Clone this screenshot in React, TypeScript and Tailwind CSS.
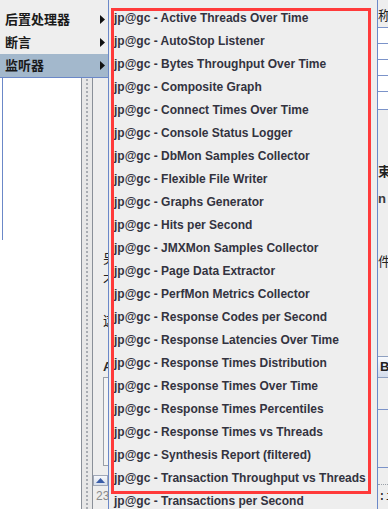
const items = [
  "Active Threads Over Time",
  "AutoStop Listener",
  "Bytes Throughput Over Time",
  "Composite Graph",
  "Connect Times Over Time",
  "Console Status Logger",
  "DbMon Samples Collector",
  "Flexible File Writer",
  "Graphs Generator",
  "Hits per Second",
  "JMXMon Samples Collector",
  "Page Data Extractor",
  "PerfMon Metrics Collector",
  "Response Codes per Second",
  "Response Latencies Over Time",
  "Response Times Distribution",
  "Response Times Over Time",
  "Response Times Percentiles",
  "Response Times vs Threads",
  "Synthesis Report (filtered)",
  "Transaction Throughput vs Threads",
  "Transactions per Second",
];

const menu = [
  { label: "后置处理器", active: false },
  { label: "断言", active: false },
  { label: "监听器", active: true },
];

function Arrow() {
  return (
    <svg width="5" height="9" viewBox="0 0 5 9" className="shrink-0">
      <path d="M0 0 L5 4.5 L0 9 Z" fill="#111" />
    </svg>
  );
}

export default function App() {
  return (
    <div
      className="relative w-[388px] h-[509px] overflow-hidden bg-[#eeeeee]"
      style={{ fontFamily: '"Liberation Sans", "Noto Sans CJK SC", sans-serif' }}
    >
      {/* background window */}
      <div className="flex h-full">
        {/* tree */}
        <div className="w-[81px] bg-white">
          <div className="ml-[2px] mt-[78px] h-[162px] border-l border-[#6b88c8]" />
        </div>

        {/* splitter */}
        <div className="w-[12px] flex justify-center border-l border-r border-[#8a9099] bg-[#e8e8e8]">
          <div className="h-full border-l-2 border-dotted border-[#a9adb3]" />
        </div>

        {/* content, left edge peeking out */}
        <div className="w-[15px] flex flex-col overflow-hidden pl-[10px] text-[13px] text-[#222] whitespace-nowrap">
          <div className="mt-[251px] h-[16px] leading-[16px]">另</div>
          <div className="mt-[6px] h-[16px] leading-[16px]">不</div>
          <div className="mt-[24px] h-[16px] leading-[16px]">这</div>
          <div className="mt-[30px] h-[16px] leading-[16px] font-bold text-[#2a2a2a]">A</div>
          <div className="mt-[2px] h-[89px] w-[20px] border border-[#9aa0a8] bg-[#f4f4f4]" />
          <div className="-ml-[10px] mt-[9px] h-[11px] w-[15px] flex items-center justify-center border border-[#a0a8b8] bg-gradient-to-b from-[#f6f8fc] to-[#d6deea]">
            <svg width="9" height="5" viewBox="0 0 9 5">
              <path d="M0 5 L4.5 0 L9 5 Z" fill="#3a5da8" />
            </svg>
          </div>
          <div className="-ml-[7px] mt-[3px] text-[12px] leading-[14px] text-[#8a8a8a]">23</div>
        </div>

        {/* area under the submenu */}
        <div className="w-[270px]" />

        {/* content, right edge peeking out */}
        <div className="flex-1 flex flex-col overflow-hidden text-[13px] text-[#222] whitespace-nowrap">
          <div className="h-[28px] pt-[8px] leading-[16px] border-b border-[#7b93c9]">称</div>
          <div className="h-[16px] bg-white border-b border-[#7b93c9]" />
          <div className="h-[16px] bg-white border-b border-[#7b93c9]" />
          <div className="h-[16px] bg-white border-b border-[#7b93c9]" />
          <div className="h-[16px] bg-white border-b border-[#7b93c9]" />
          <div className="h-[18px] bg-white border-b border-[#7b93c9]" />
          <div className="mt-[54px] font-bold leading-[16px]">束</div>
          <div className="mt-[12px] font-bold leading-[14px] text-[#3a3a3a]">n</div>
          <div className="mt-[48px] leading-[16px]">件</div>
          <div className="mt-[86px] h-[22px] flex items-center pl-[2px] border-y border-[#8ea0c0] bg-gradient-to-b from-[#f8fafd] to-[#d3dceb] font-bold">B</div>
          <div className="h-[32px] border-b border-[#7b93c9]" />
          <div className="h-[58px] border-b border-[#7b93c9]" />
          <div className="mt-[16px] h-[3px] border-t border-dotted border-[#9aa0a8]" />
          <div className="mt-[3px] leading-[14px]" style={{ fontFamily: '"Liberation Mono", monospace' }}>:i</div>
        </div>
      </div>

      {/* main popup menu */}
      <div className="absolute left-0 top-0 w-[108px] h-[78px] pt-[8px] bg-[#eeeeee] border-b border-[#6b88c8]">
        {menu.map((m) => (
          <div
            key={m.label}
            className={`h-[23px] flex items-center justify-between pl-[5px] pr-[3px] text-[13px] font-bold text-[#1a1a1a] ${
              m.active ? "bg-[#a3b8cc]" : ""
            }`}
          >
            <span>{m.label}</span>
            <Arrow />
          </div>
        ))}
      </div>

      {/* listener submenu */}
      <div className="absolute left-[108px] top-0 bottom-0 w-[270px] pt-[6px] bg-[#eeeeee] border-l border-r border-[#6b88c8]">
        {items.map((t) => (
          <div
            key={t}
            className="h-[23px] flex items-center pl-[5px] text-[12px] font-bold text-[#333340] whitespace-nowrap"
          >
            jp@gc - {t}
          </div>
        ))}
        <div className="absolute left-[2px] top-[8px] w-[260px] h-[486px] border-[3px] border-[#ff3a3a]" />
      </div>
    </div>
  );
}
